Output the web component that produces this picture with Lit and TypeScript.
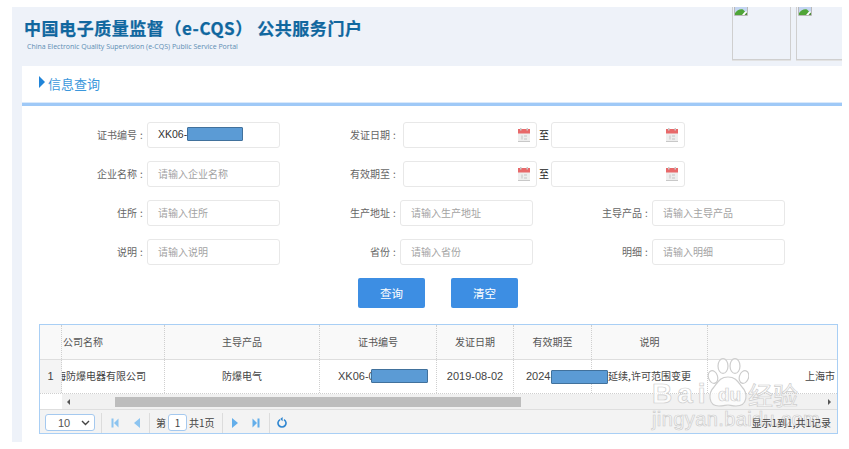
import { LitElement, html, css, svg } from "lit";
import { customElement } from "lit/decorators.js";

const calendar = html`<svg class="cal" viewBox="0 0 12 14" width="12" height="14">
  <rect x="0" y="1" width="12" height="13" fill="#eeeeee"/>
  <rect x="0" y="1" width="12" height="4.5" fill="#e8696a"/>
  <rect x="2" y="0" width="1.5" height="2.5" fill="#c9c9c9"/>
  <rect x="8.5" y="0" width="1.5" height="2.5" fill="#c9c9c9"/>
  <rect x="0" y="13" width="12" height="1" fill="#c8c8c8"/>
  <rect x="3.5" y="7.5" width="1" height="4" fill="#c4c4c4"/>
  <rect x="6" y="7.5" width="3" height="1" fill="#c4c4c4"/>
  <rect x="6" y="10.5" width="3" height="1" fill="#c4c4c4"/>
</svg>`;

const brokenImage = html`<svg class="broken" viewBox="0 0 14 16" width="14" height="16">
  <path d="M.5 .5H9.5L13.5 4.5V15.5H.5Z" fill="#fff" stroke="#b9b9b9"/>
  <path d="M1 1H9V5H13V11.5L1 12.5Z" fill="#c5d6f2"/>
  <path d="M1 15V13C3 10.5 6 8.5 9 9.5L11 11.5L8 15Z" fill="#4fa538"/>
  <path d="M10.5 15L12.5 12.5L13 13V15Z" fill="#4f8f3c"/>
</svg>`;

const tri = (left: boolean, bar: boolean, light: boolean) => html`<svg class="pgi" viewBox="0 0 8 10" width="8" height="10">
  <g fill=${light ? "#8cc4f0" : "#63aeea"}>
    ${left
      ? svg`<path d=${bar ? "M7.5 .5V9.5L3 5Z" : "M7 0V10L1 5Z"}/>`
      : svg`<path d=${bar ? "M.5 .5V9.5L5 5Z" : "M1 0V10L7 5Z"}/>`}
    ${bar ? svg`<rect x=${left ? 0.5 : 5.5} y="0.5" width="2" height="9"/>` : ""}
  </g>
</svg>`;

const paw = html`<svg class="paw" viewBox="0 0 42 50" width="42" height="50">
  <g fill="rgba(255,255,255,.72)" stroke="#cdcdcd" stroke-width="1.2">
    <ellipse cx="6" cy="19" rx="4.6" ry="6.5" transform="rotate(-18 6 19)"/>
    <ellipse cx="16" cy="8" rx="5" ry="7.4"/>
    <ellipse cx="28" cy="8" rx="5" ry="7.4"/>
    <ellipse cx="37" cy="19" rx="4.6" ry="6.5" transform="rotate(18 37 19)"/>
    <path d="M21 19C29 19 31 24 35 29C41 35 41 48 29 48C25 48 23 47 21 47C19 47 16 48 12 48C1 48 1 35 7 29C11 24 13 19 21 19Z"/>
  </g>
</svg>`;

@customElement("app-root")
export class AppRoot extends LitElement {
  static styles = css`
    :host {
      display: block;
      width: 849px;
      height: 449px;
      overflow: hidden;
      background: #fff;
      font-family: "Noto Sans CJK SC", "Liberation Sans", sans-serif;
      font-size: 10px;
      color: #555;
    }
    .page {
      position: relative;
      margin: 7px 7px 0 12px;
      height: 435px;
      background: #eef2f9;
    }
    .head {
      display: flex;
      height: 59px;
      overflow: hidden;
    }
    .brand {
      flex: 0 0 720px;
      box-sizing: border-box;
      padding: 9px 0 0 12px;
    }
    .brand h1 {
      margin: 0;
      font-size: 17px;
      line-height: 24px;
      font-weight: 700;
      letter-spacing: 0.55px;
      -webkit-text-stroke: 0.25px #10679f;
      color: #10679f;
      white-space: pre;
    }
    .brand p {
      margin: 2px 0 0 3px;
      font-family: "Open Sans", sans-serif;
      font-size: 7px;
      line-height: 9px;
      color: #5c8db3;
      white-space: nowrap;
    }
    .thumb {
      flex: 0 0 57px;
      height: 52px;
      margin-right: 5px;
      border: 1px solid #cfcfcf;
      border-top: 0;
      box-shadow: 0 1px 0 #e2e2e2;
    }
    .broken {
      display: block;
      margin: -7px 0 0 1px;
    }
    .main {
      margin-left: 10px;
      height: 376px;
      background: #fff;
    }
    .tab {
      display: flex;
      align-items: center;
      gap: 3px;
      height: 37px;
      box-sizing: border-box;
      padding: 0 0 2px 17px;
      border-bottom: 1px solid #d9e9fb;
      font-size: 13px;
      color: #3b97dc;
    }
    .tab i {
      width: 0;
      height: 0;
      border-left: 6px solid #2184d8;
      border-top: 6px solid transparent;
      border-bottom: 6px solid transparent;
      margin-top: -2px;
    }
    .rule {
      height: 3px;
      background: #9fc9f7;
    }
    .form {
      display: grid;
      grid-template-columns: 125px 133px 120px 133px 119px 133px;
      grid-auto-rows: 26px;
      row-gap: 13px;
      margin-top: 16px;
    }
    .lab {
      display: flex;
      align-items: center;
      justify-content: flex-end;
      padding: 0 2px 2px 0;
      white-space: nowrap;
      color: #666;
    }
    .lab b {
      font-weight: 400;
      margin-left: 3px;
      width: 5px;
    }
    .inp {
      display: flex;
      align-items: center;
      box-sizing: border-box;
      height: 26px;
      padding: 0 0 2px 10px;
      border: 1px solid #e8e8e8;
      border-radius: 3px;
      background: #fff;
      color: #a3a3a3;
      white-space: nowrap;
    }
    .inp.val {
      color: #333;
      font-family: "Liberation Sans", sans-serif;
      font-size: 10.5px;
    }
    .red {
      display: inline-block;
      box-sizing: border-box;
      width: 56px;
      height: 14px;
      background: #5b9bd5;
      border: 1px solid #41719c;
      border-radius: 1px;
    }
    .inp.val .red {
      margin-top: -1px;
    }
    .dates {
      grid-column: span 3;
      display: flex;
      align-items: center;
      margin-left: 3px;
    }
    .inp.date {
      flex: 0 0 134px;
      justify-content: flex-end;
      padding: 0 6px 0 0;
    }
    .to {
      flex: 0 0 14px;
      padding-bottom: 2px;
      text-align: center;
      color: #222;
    }
    .cal {
      display: block;
    }
    .btns {
      display: flex;
      gap: 26px;
      margin: 13px 0 0 336px;
    }
    .btn {
      box-sizing: border-box;
      display: flex;
      align-items: center;
      justify-content: center;
      width: 67px;
      height: 30px;
      padding-bottom: 1px;
      background: #3d8ee3;
      border-radius: 2px;
      color: #fff;
      font-size: 11.5px;
    }
    .table {
      margin: 16px 0 0 17px;
      width: 799px;
      height: 110px;
      box-sizing: border-box;
      border: 1px solid #a9cff5;
      background: #f3f3f3;
      overflow: hidden;
    }
    .row {
      display: grid;
      grid-template-columns: 22px 103px 155px 117px 77px 78px 116px 129px;
    }
    .row > div {
      display: flex;
      align-items: center;
      justify-content: center;
      position: relative;
      box-sizing: border-box;
      padding-bottom: 2px;
      border-right: 1px dotted #cfcfcf;
      white-space: nowrap;
      overflow: hidden;
      color: #444;
    }
    .row > div:last-child {
      border-right: 0;
    }
    .thead {
      height: 34px;
      background: #f9f9f9;
      border-bottom: 1px solid #dedede;
    }
    .thead > div {
      color: #555;
    }
    .tbody {
      height: 33px;
      background: #fff;
      border-bottom: 1px dotted #cfcfcf;
    }
    .row > .rn {
      background: #f4f4f4;
      font-family: "Liberation Sans", sans-serif;
      font-size: 11px;
    }
    .row > .left {
      justify-content: flex-start;
      padding-left: 1px;
    }
    .row > .company {
      justify-content: flex-end;
      padding-right: 18px;
    }
    .row > .end {
      justify-content: flex-end;
      padding-right: 2px;
    }
    .row > .num {
      font-family: "Liberation Sans", sans-serif;
      font-size: 11px;
    }
    .row > .cert {
      justify-content: flex-start;
      padding-left: 18px;
    }
    .row > .expiry {
      justify-content: flex-start;
      padding-left: 12px;
      overflow: visible;
    }
    .over {
      position: absolute;
      top: 9px;
      left: 51px;
      width: 57px;
    }
    .over.b {
      left: 37px;
      top: 10px;
    }
    .scroll {
      display: flex;
      align-items: center;
      height: 16px;
      background: #f1f1f1;
      border-bottom: 1px solid #dedede;
      box-sizing: border-box;
    }
    .scorner {
      flex: 0 0 22px;
      height: 100%;
      background: #fff;
    }
    .sarrow {
      flex: 0 0 53px;
      box-sizing: border-box;
      padding-left: 5px;
    }
    .sarrow i,
    .sright i {
      display: block;
      width: 0;
      height: 0;
      border-top: 3px solid transparent;
      border-bottom: 3px solid transparent;
    }
    .sarrow i {
      border-right: 3px solid #555;
    }
    .sthumb {
      flex: 0 0 406px;
      height: 10px;
      background: #bdbdbd;
    }
    .sright {
      flex: 1;
      display: flex;
      justify-content: flex-end;
      padding-right: 6px;
    }
    .sright i {
      border-left: 3px solid #555;
    }
    .pager {
      display: flex;
      align-items: center;
      height: 25px;
      padding-left: 5px;
      color: #444;
      font-size: 10px;
    }
    .sel {
      display: flex;
      align-items: center;
      justify-content: space-between;
      box-sizing: border-box;
      width: 50px;
      height: 17px;
      padding: 0 4px 0 12px;
      border: 1px solid #a5c9ef;
      border-radius: 3px;
      background: #fff;
      font-family: "Liberation Sans", sans-serif;
      font-size: 11px;
      color: #555;
    }
    .sep {
      width: 1px;
      height: 20px;
      background: #dcdcdc;
    }
    .sep.a { margin: 0 9px 0 6px; }
    .sep.b { margin: 0 6px 0 8px; }
    .sep.c { margin: 0 8px 0 7px; }
    .sep.d { margin: 0 7px 0 9px; }
    .gap1 { width: 14px; }
    .gap2 { width: 13px; }
    .pgi {
      display: block;
    }
    .pinput {
      display: flex;
      align-items: center;
      justify-content: center;
      box-sizing: border-box;
      width: 19px;
      height: 17px;
      border: 1px solid #a5c9ef;
      border-radius: 3px;
      background: #fff;
      margin: 0 2px;
    }
    .info {
      margin-left: auto;
      padding: 0 6px 1px 0;
      position: relative;
      z-index: 2;
      color: #444;
    }
    .mark {
      position: absolute;
      left: 640px;
      top: 351px;
      width: 170px;
      height: 84px;
      pointer-events: none;
      font-family: "Liberation Sans", sans-serif;
      color: rgba(255, 255, 255, 0.72);
      -webkit-text-stroke: 0.7px #cdcdcd;
      z-index: 1;
    }
    .paw {
      position: absolute;
      left: 55px;
      top: 0;
    }
    .mrow {
      position: absolute;
      left: 0;
      top: 21px;
      display: flex;
      align-items: center;
      line-height: 26px;
    }
    .bai {
      font-size: 28px;
      font-weight: 700;
      letter-spacing: 5px;
      width: 66px;
    }
    .du {
      position: relative;
      font-size: 19px;
      font-weight: 700;
      width: 30px;
      margin-top: 3px;
    }
    .cn {
      font-family: "Noto Sans CJK SC", sans-serif;
      font-size: 25px;
      white-space: nowrap;
    }
    .url {
      position: absolute;
      left: 0;
      top: 49px;
      font-size: 20px;
      letter-spacing: 0.4px;
      line-height: 24px;
      white-space: nowrap;
    }
  `;

  private label(t: string) {
    return html`<div class="lab">${t}<b>:</b></div>`;
  }

  private input(ph: string) {
    return html`<div class="inp">${ph}</div>`;
  }

  private dates() {
    return html`<div class="dates">
      <div class="inp date">${calendar}</div>
      <div class="to">至</div>
      <div class="inp date">${calendar}</div>
    </div>`;
  }

  render() {
    return html`<div class="page">
      <div class="head">
        <div class="brand">
          <h1>中国电子质量监督（e-CQS） 公共服务门户</h1>
          <p>China Electronic Quality Supervision (e-CQS) Public Service Portal</p>
        </div>
        <div class="thumb">${brokenImage}</div>
        <div class="thumb">${brokenImage}</div>
      </div>
      <div class="main">
        <div class="tab"><i></i>信息查询</div>
        <div class="rule"></div>
        <div class="form">
          ${this.label("证书编号")}
          <div class="inp val">XK06-<span class="red"></span></div>
          ${this.label("发证日期")} ${this.dates()}
          ${this.label("企业名称")} ${this.input("请输入企业名称")}
          ${this.label("有效期至")} ${this.dates()}
          ${this.label("住所")} ${this.input("请输入住所")}
          ${this.label("生产地址")} ${this.input("请输入生产地址")}
          ${this.label("主导产品")} ${this.input("请输入主导产品")}
          ${this.label("说明")} ${this.input("请输入说明")}
          ${this.label("省份")} ${this.input("请输入省份")}
          ${this.label("明细")} ${this.input("请输入明细")}
        </div>
        <div class="btns">
          <div class="btn">查询</div>
          <div class="btn">清空</div>
        </div>
        <div class="table">
          <div class="row thead">
            <div></div>
            <div class="left">公司名称</div>
            <div>主导产品</div>
            <div>证书编号</div>
            <div>发证日期</div>
            <div>有效期至</div>
            <div>说明</div>
            <div></div>
          </div>
          <div class="row tbody">
            <div class="rn">1</div>
            <div class="company">海防爆电器有限公司</div>
            <div>防爆电气</div>
            <div class="num cert">XK06-0<span class="red over"></span></div>
            <div class="num">2019-08-02</div>
            <div class="num expiry">2024-<span class="red over b"></span></div>
            <div>延续,许可范围变更</div>
            <div class="end">上海市</div>
          </div>
          <div class="scroll">
            <div class="scorner"></div>
            <div class="sarrow"><i></i></div>
            <div class="sthumb"></div>
            <div class="sright"><i></i></div>
          </div>
          <div class="pager">
            <div class="sel">10
              <svg viewBox="0 0 9 6" width="9" height="6"><path d="M1 1L4.5 4.5L8 1" fill="none" stroke="#444" stroke-width="1.4"/></svg>
            </div>
            <div class="sep a"></div>
            ${tri(true, true, true)}
            <span class="gap1"></span>
            ${tri(true, false, true)}
            <div class="sep b"></div>
            第<div class="pinput">1</div>共1页
            <div class="sep c"></div>
            ${tri(false, false, false)}
            <span class="gap2"></span>
            ${tri(false, true, false)}
            <div class="sep d"></div>
            <svg viewBox="0 0 10 11" width="10" height="11"><path d="M3 2.6A4 4 0 1 0 7 2.6" fill="none" stroke="#2f86d0" stroke-width="1.6"/><path d="M5.6 0V4.2L3.2 2.1Z" fill="#2f86d0"/></svg>
            <div class="info">显示1到1,共1记录</div>
          </div>
        </div>
      </div>
      <div class="mark">
        ${paw}
        <div class="mrow"><span class="bai">Bai</span><span class="du">du</span><span class="cn">经验</span></div>
        <div class="url">jingyan.baidu.com</div>
      </div>
    </div>`;
  }
}
